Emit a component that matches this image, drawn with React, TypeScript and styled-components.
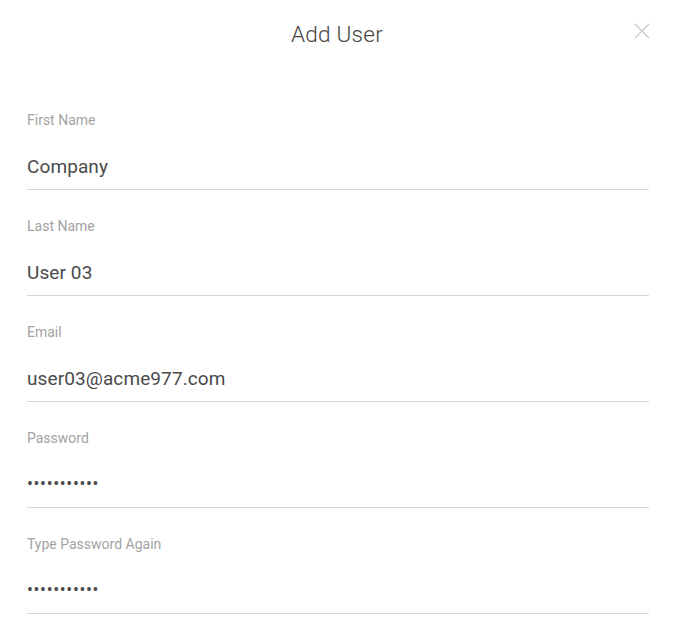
import styled, { createGlobalStyle } from "styled-components"

const GlobalStyle = createGlobalStyle`
  * { box-sizing: border-box; }
  html, body { margin: 0; padding: 0; background: #fff; }
  body { font-family: Roboto, "Liberation Sans", sans-serif; }
`

const Dialog = styled.div`
  width: 674px;
  min-height: 619px;
  background: #fff;
  display: flex;
  flex-direction: column;
`

const Header = styled.header`
  position: relative;
  height: 84px;
  display: flex;
  justify-content: center;
  padding-top: 21px;
`

const Title = styled.h2`
  margin: 0;
  font-family: Roboto, "Liberation Sans", sans-serif;
  font-weight: 300;
  font-size: 22.6px;
  line-height: 28px;
  color: #444;
  letter-spacing: 0.2px;
`

const CloseButton = styled.button`
  position: absolute;
  top: 22px;
  right: 23px;
  width: 18px;
  height: 18px;
  padding: 0;
  border: 0;
  background: none;
  cursor: pointer;
  display: flex;
  align-items: center;
  justify-content: center;
`

const Form = styled.form`
  display: flex;
  flex-direction: column;
  padding: 0 25px 0 27px;
`

const Field = styled.div`
  display: flex;
  flex-direction: column;
  padding-top: 28px;
`

const Label = styled.label`
  font-size: 14px;
  line-height: 16px;
  color: #a3a3a3;
`

const Input = styled.input`
  margin-top: 15px;
  height: 47px;
  padding: 0;
  border: 0;
  border-bottom: 1px solid #d6d6d6;
  outline: 0;
  background: transparent;
  font-family: Roboto, "Liberation Sans", sans-serif;
  font-size: 19px;
  letter-spacing: 0.1px;
  color: #4a4a4a;
  &[type="password"] {
    font-size: 17.5px;
    letter-spacing: 0.65px;
  }
`

const fields = [
  { id: "first", label: "First Name", value: "Company", type: "text" },
  { id: "last", label: "Last Name", value: "User 03", type: "text" },
  { id: "email", label: "Email", value: "user03@acme977.com", type: "email" },
  { id: "pass", label: "Password", value: "secretpass1", type: "password" },
  { id: "pass2", label: "Type Password Again", value: "secretpass1", type: "password" },
]

function App() {
  return (
    <>
      <GlobalStyle />
      <Dialog>
        <Header>
          <Title>Add User</Title>
          <CloseButton aria-label="Close">
            <svg width="16" height="16" viewBox="0 0 16 16">
              <path d="M1 1 L15 15 M15 1 L1 15" stroke="#c8c8c8" strokeWidth="1.3" />
            </svg>
          </CloseButton>
        </Header>
        <Form>
          {fields.map((f) => (
            <Field key={f.id}>
              <Label htmlFor={f.id}>{f.label}</Label>
              <Input id={f.id} type={f.type} defaultValue={f.value} readOnly />
            </Field>
          ))}
        </Form>
      </Dialog>
    </>
  )
}

export default App
